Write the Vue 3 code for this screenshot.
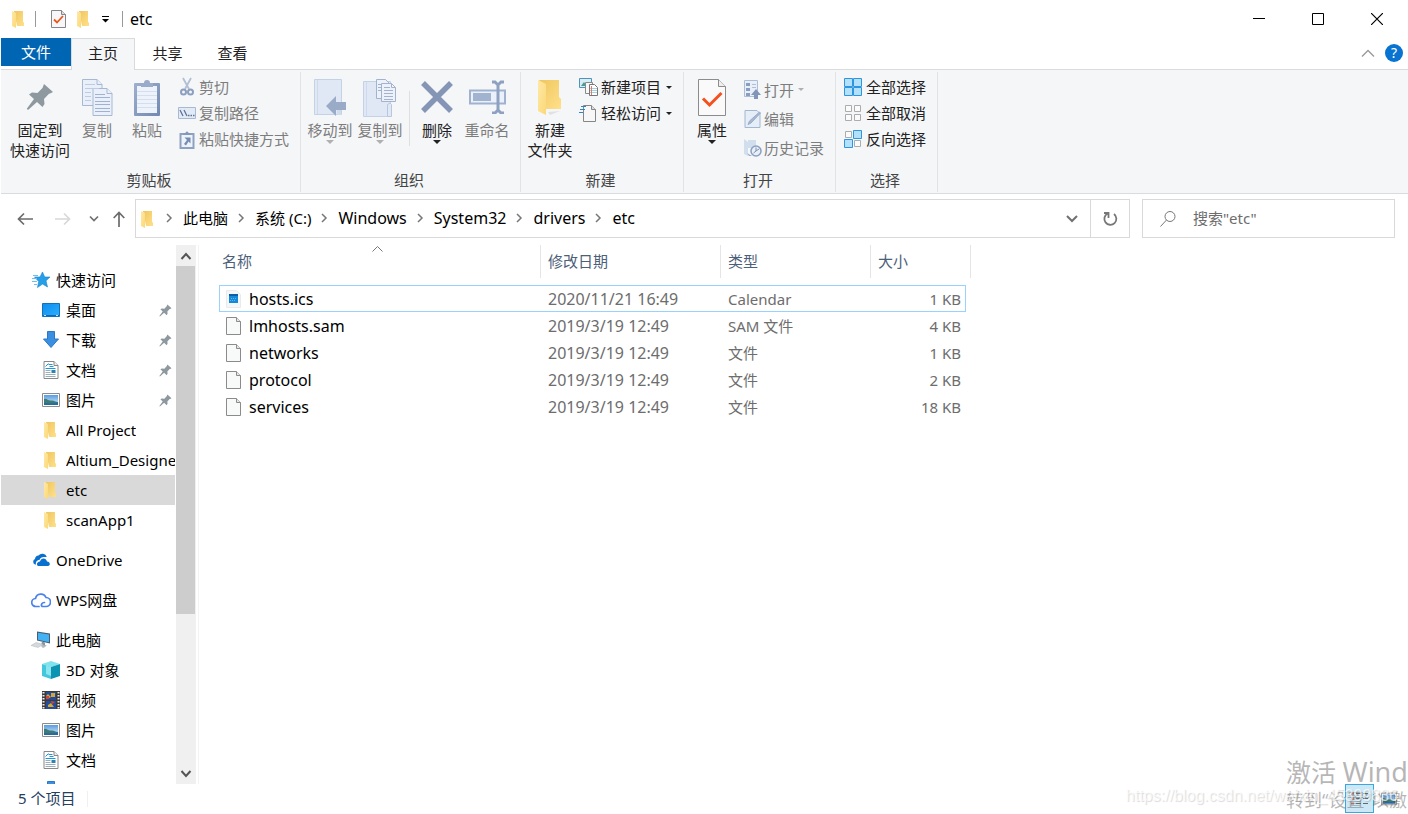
<script setup>
import { ref } from 'vue'

const tabs = ['主页', '共享', '查看']
const crumbs = ['此电脑', '系统 (C:)', 'Windows', 'System32', 'drivers', 'etc']
const search = ref('')
const isLatin = (s) => /^[\w ]+$/.test(s)

const nav = [
  { label: '快速访问', icon: 'star', root: true },
  { label: '桌面', icon: 'desktop', pinned: true },
  { label: '下载', icon: 'download', pinned: true },
  { label: '文档', icon: 'document', pinned: true },
  { label: '图片', icon: 'picture', pinned: true },
  { label: 'All Project', icon: 'folder' },
  { label: 'Altium_Designer', icon: 'folder' },
  { label: 'etc', icon: 'folder', selected: true },
  { label: 'scanApp1', icon: 'folder' },
  { label: 'OneDrive', icon: 'onedrive', root: true },
  { label: 'WPS网盘', icon: 'wps', root: true },
  { label: '此电脑', icon: 'pc', root: true },
  { label: '3D 对象', icon: 'cube' },
  { label: '视频', icon: 'video' },
  { label: '图片', icon: 'picture' },
  { label: '文档', icon: 'document' },
  { label: '', icon: 'download' }
]

const files = [
  { name: 'hosts.ics', date: '2020/11/21 16:49', type: 'Calendar', size: '1 KB', icon: 'calendar', focused: true },
  { name: 'lmhosts.sam', date: '2019/3/19 12:49', type: 'SAM 文件', size: '4 KB', icon: 'file' },
  { name: 'networks', date: '2019/3/19 12:49', type: '文件', size: '1 KB', icon: 'file' },
  { name: 'protocol', date: '2019/3/19 12:49', type: '文件', size: '2 KB', icon: 'file' },
  { name: 'services', date: '2019/3/19 12:49', type: '文件', size: '18 KB', icon: 'file' }
]
</script>

<template>
  <div class="window">
    <svg class="sprite" aria-hidden="true">
      <defs>
        <linearGradient id="g-fold" x1="0" y1="0" x2="1" y2="1"><stop offset="0" stop-color="#ffe9a6" /><stop offset="1" stop-color="#fbd878" /></linearGradient>
        <linearGradient id="g-back" x1="0" y1="0" x2="1" y2="1"><stop offset="0" stop-color="#efc65f" /><stop offset="1" stop-color="#ffe08a" /></linearGradient>
        <linearGradient id="g-clip" x1="0" y1="0" x2="1" y2="1"><stop offset="0" stop-color="#9fb0cf" /><stop offset="1" stop-color="#7288b0" /></linearGradient>
        <linearGradient id="g-desk" x1="0" y1="0" x2="1" y2="1"><stop offset="0" stop-color="#0d8eee" /><stop offset="1" stop-color="#2cb0ff" /></linearGradient>
        <linearGradient id="g-sky" x1="0" y1="0" x2="0" y2="1"><stop offset="0" stop-color="#5a9be0" /><stop offset="1" stop-color="#d8eefa" /></linearGradient>
        <symbol id="i-folder" viewBox="0 0 18 18">
          <path d="M4 1h9v11l1 .5V16H7z" fill="url(#g-back)" /><path d="M2 1l4 2v15l-4-2z" fill="url(#g-fold)" />
        </symbol>
        <symbol id="i-bigfolder" viewBox="0 0 28 38">
          <path d="M12 34l12-1-10 4z" fill="#dfe1e4" /><path d="M3 2h20v17l2 2v10H10z" fill="url(#g-back)" /><path d="M2 2l8 4v31l-8-4z" fill="url(#g-fold)" />
        </symbol>
        <symbol id="i-props" viewBox="0 0 28 37">
          <path d="M.5.5h20l7 7v29H.5z" fill="#fafafa" stroke="#8c8c8c" /><path d="M20.500.5v7h7" fill="#eee" stroke="#8c8c8c" /><path d="M5 19.500l6.500 6.500L23.500 14" fill="none" stroke="#f4511e" stroke-width="3" />
        </symbol>
        <symbol id="i-smallprops" viewBox="0 0 15 18">
          <path d="M.5.5h10l4 4v13H.5z" fill="#f7f7f9" stroke="#85858a" /><path d="M10.500.5v4h4" fill="#ddd" stroke="#85858a" /><path d="M3 9.500l3 3 6-6.500" fill="none" stroke="#ee5518" stroke-width="1.800" />
        </symbol>
        <symbol id="i-pin" viewBox="0 0 28 28">
          <path d="M18 1l9 8-3 1.500-1 .2-5 5.300.5 5-2 3-5.500-5L2 27 .8 25.800 8 16 3 11.500l3-2 5.500.5L16.500 5z" fill="#8d989f" />
        </symbol>
        <symbol id="i-copy" viewBox="0 0 31 37">
          <g fill="#eaf0f9" stroke="#a8b8d2"><path d="M.5.500H15l5 5v21H.5z" /><path d="M15 .5v5h5" /><path d="M11 9.500h14l5 5v22H11z" /><path d="M25 9.500v5h5" /></g>
          <path d="M3 5.500h10M3 9.500h14M3 13.500h6M3 17.500h6M3 21.500h6" stroke="#bfcbe0" /><path d="M13 15.500h10M13 18.500h15M13 22.500h15M13 25.500h15M13 29.500h15M13 32.500h15" stroke="#a0b2d2" />
        </symbol>
        <symbol id="i-paste" viewBox="0 0 26 37">
          <rect y="4" width="26" height="33" rx="1" fill="url(#g-clip)" /><path d="M3 7h20v27H3z" fill="#eef3fb" /><path d="M7 4h3a3 3 0 0 1 6 0h3v4H7z" fill="#9aabc9" /><path d="M3 12.500h20M3 16.500h20M3 20.500h20M3 24.500h20M3 28.500h20" stroke="#d3dfef" />
        </symbol>
        <symbol id="i-cut" viewBox="0 0 18 20">
          <path d="M5 1l6 11M13 1L7 12" stroke="#b3bfd4" stroke-width="1.800" /><g fill="none" stroke="#8c9fbf" stroke-width="2"><circle cx="5.500" cy="15" r="2.500" /><circle cx="12.500" cy="15" r="2.500" /></g>
        </symbol>
        <symbol id="i-path" viewBox="0 0 18 12">
          <path d="M.5.500h17v11H.5z" fill="#e2eaf5" stroke="#a8b9d3" /><path d="M2 3l3 6M6 3l3 6M10 8.500h1.500M12.500 8.500H14M15 8.500h1.500" stroke="#5d7399" stroke-width="1.300" />
        </symbol>
        <symbol id="i-shortcut" viewBox="0 0 15 19">
          <path d="M1 4h13v14H1z" fill="#edf3fb" stroke="#8fa1c0" stroke-width="2" /><path d="M4 5V3h2a1.500 1.500 0 0 1 3 0h2v2z" fill="#8598ba" /><path d="M5 7.500h6v6L9 11.500l-2.500 4-2-1.500 3-4z" fill="#778cb1" />
        </symbol>
        <symbol id="i-move" viewBox="0 0 33 38">
          <path d="M.5 1.500h27v35H.5z" fill="#dfe8f4" stroke="#c4d2e6" /><path d="M3.500 2v34" stroke="#cedaeb" /><path d="M23 24h4v13h-4z" fill="#d0dcec" /><path d="M12 28l10-10v6h10v8H22v6z" fill="#9aabc8" />
        </symbol>
        <symbol id="i-copyto" viewBox="0 0 34 39">
          <path d="M.5 3.500h27v35H.5z" fill="#dfe8f4" stroke="#c4d2e6" /><path d="M3.500 4v34" stroke="#cedaeb" /><path d="M24.500 26.500q3-3 4 0v12h-4z" fill="#dfe8f4" stroke="#b9c7dc" /><g fill="#edf2fa" stroke="#a3b3ce"><path d="M13.500 1.500h9l4 4v15h-13z" /><path d="M18.500 5.500h10l4 4v14h-14zM28.500 5.500v4h4" /></g><path d="M15 6.500h3M15 9.500h3M15 12.500h3M21 9.500h6M21 12.500h9M21 15.500h9M21 18.500h9M21 21.500h9" stroke="#a3b3ce" />
        </symbol>
        <symbol id="i-delete" viewBox="0 0 32 32"><path d="M2 2l28 28M30 2L2 30" stroke="#8595b5" stroke-width="5.500" /></symbol>
        <symbol id="i-rename" viewBox="0 0 37 34">
          <path d="M1 10.500h35v13H1z" fill="#eaf1fa" stroke="#a0b2d0" stroke-width="2" /><path d="M4 13h18v8H4z" fill="#a2b3d0" /><path d="M23 2h3l3 3 3-3h3M29 4v27M23 33h3l3-3 3 3h3" fill="none" stroke="#8fa1c0" stroke-width="3" />
        </symbol>
        <symbol id="i-newitem" viewBox="0 0 19 18">
          <path d="M.5.500h12v9H.5z" fill="#d9edf7" stroke="#4e93b8" /><path d="M2 8l3-4 2 3 2-2 3 3z" fill="#4d9a8f" /><path d="M6.500 4.500h7v11h-7z" fill="#f8f8f8" stroke="#8a8a8a" /><path d="M10.500 6.500h5l3 3v8h-8z" fill="#fff" stroke="#777" /><path d="M11 10.500h7M11 12.500h7M11 14.500h7" stroke="#a9cfe2" /><path d="M12.500 8v9" stroke="#e67a6a" />
        </symbol>
        <symbol id="i-easy" viewBox="0 0 19 18">
          <path d="M4.500 1.500h8l4 4v12h-12z" fill="#f7f7f7" stroke="#868686" /><path d="M12.500 1.500v4h4" fill="#ddd" stroke="#868686" /><path d="M2 2.500h5M1 5.500h5M0 8.500h4" stroke="#2d86c0" />
        </symbol>
        <symbol id="i-open" viewBox="0 0 18 19">
          <path d="M.5.500h13v16H.5z" fill="#e8eff8" stroke="#aebdd6" /><path d="M2 3h4v3H2zM2 8h4v3H2zM2 13h4v3H2z" fill="#8a9dbe" /><path d="M8 4.500h4M8 7.500h4" stroke="#b1bfd6" /><path d="M12 9l5 6h-3v4h-4v-4H7z" fill="#8195b8" />
        </symbol>
        <symbol id="i-edit" viewBox="0 0 17 18">
          <path d="M.5.500h12l3 3v14H.5z" fill="#e5edf7" stroke="#a5b6d0" /><path d="M3.500 14.500L5 11l10-9 1 1-9.500 10z" fill="#a8b7d1" stroke="#9badc9" />
        </symbol>
        <symbol id="i-history" viewBox="0 0 18 18">
          <path d="M0 0l4 3v14l-4-2zM4 1h8v8H4z" fill="#d1deed" /><path d="M3 14l5 3H5z" fill="#9caec9" /><circle cx="12" cy="12" r="5" fill="#e8eff8" stroke="#8c9fbf" stroke-width="1.500" /><path d="M12 8.500V12l3-2M12 12l-2.500 2" fill="none" stroke="#7b90b3" />
        </symbol>
        <symbol id="i-selall" viewBox="0 0 18 18"><g fill="#b3e1fb" stroke="#3095df"><path d="M.5.500h8v8h-8zM9.500.500h8v8h-8zM.5 9.500h8v8h-8zM9.500 9.500h8v8h-8z" /></g></symbol>
        <symbol id="i-selnone" viewBox="0 0 18 18"><g fill="#fbfbfb" stroke="#acacac"><path d="M1.500 1.500h6v6h-6zM10.500 1.500h6v6h-6zM1.500 10.500h6v6h-6zM10.500 10.500h6v6h-6z" /></g></symbol>
        <symbol id="i-selinv" viewBox="0 0 18 18"><path d="M1.500 1.500h6v6h-6zM10.500 10.500h6v6h-6z" fill="#fbfbfb" stroke="#acacac" /><path d="M9.500.500h8v8h-8zM.5 9.500h8v8h-8z" fill="#b3e1fb" stroke="#3095df" /></symbol>
        <symbol id="i-star" viewBox="0 0 18 16">
          <path d="M10.500 0l2.200 5H18l-4 3.800 1.500 6.200-5-3-5 3.500 1.200-6L2.500 5H8z" fill="#269fe8" stroke="#1583cc" stroke-width=".6" /><path d="M1 3.500h5M0 6.500h5M0 9.500h5M2 12.500h3" stroke="#6ac0f2" />
        </symbol>
        <symbol id="i-desktop" viewBox="0 0 18 14"><path d="M.5.500h17v13H.5z" fill="url(#g-desk)" stroke="#1272b8" /><path d="M1 12.500h16" stroke="#0f68b2" /><path d="M2 12.500h2M14 12.500h2" stroke="#bfe7ff" /></symbol>
        <symbol id="i-download" viewBox="0 0 18 18"><path d="M5.500.500h7V8h4L9 16.500 1.500 8h4z" fill="#3b8fe0" stroke="#2b78c6" /></symbol>
        <symbol id="i-document" viewBox="0 0 15 18">
          <path d="M.5.500h10l4 4v13H.5z" fill="#fff" stroke="#888" /><path d="M10.500.500v4h4" fill="#eee" stroke="#888" /><path d="M2 5.500l3-3M5 3.500h4M6 5.500h4M2 7.500h10" fill="none" stroke="#1c97d8" /><path d="M2 9.500h5M2 11.500h5M2 13.500h10M2 15.500h10" stroke="#9badb8" /><path d="M8 9h4v3H8z" fill="#2f82b0" />
        </symbol>
        <symbol id="i-picture" viewBox="0 0 18 14">
          <path d="M.5.500h17v13H.5z" fill="#fff" stroke="#8c8c8c" /><path d="M2 2h14v10H2z" fill="url(#g-sky)" /><path d="M2 6c3-1 4 2 7 1.500S13 9 16 9v3H2z" fill="#3d7b75" /><path d="M2 10q7 1 14-.5V12H2z" fill="#2768a8" />
        </symbol>
        <symbol id="i-onedrive" viewBox="0 0 18 13"><path d="M4 11H3a3 3 0 0 1 0-5.500A4 4 0 0 1 6.500 2a4.800 4.800 0 0 1 8.300 1.500C9 3 8 5 7.500 6.500 4.500 6.500 3.500 9 4 11z" fill="#0a70cf" /><path d="M6 12.500c-2-1-1-4.500 2-4.500 1-4 6-4 7 0 3 0 4 4 1 4.500z" fill="#0a70cf" /></symbol>
        <symbol id="i-wps" viewBox="0 0 20 16"><path d="M8 14.500H5A4 4 0 0 1 4.500 6.500 5.500 5.500 0 0 1 15 5.500a4.500 4.500 0 0 1 0 9h-3q-2 0-1.500-2t3-2" fill="none" stroke="#4a82ee" stroke-width="1.700" stroke-linecap="round" /></symbol>
        <symbol id="i-pc" viewBox="0 0 20 17"><path d="M6 0l13 2v10L6 9z" fill="#4a5c6d" /><path d="M7 1.200l11 1.700v7.800L7 8.200z" fill="#42b2f4" /><path d="M11 10l3 1v2.500l2 1-6-.5z" fill="#8798a5" /><path d="M5 11l7 2-5 3-7-2z" fill="#d6dadd" stroke="#b0b6ba" stroke-width=".5" /><path d="M10 15l3-1 2 1-3 1.500z" fill="#b3bac0" /></symbol>
        <symbol id="i-cube" viewBox="0 0 18 18"><path d="M9 0l9 3-9 3-9-3z" fill="#80e2ed" /><path d="M0 3l9 3v12l-9-3z" fill="#43c7dc" /><path d="M18 3L9 6v12l9-3z" fill="#0a94b2" /><path d="M4 4.500L9 6v9l-5-2z" fill="#8ae5ef" /></symbol>
        <symbol id="i-video" viewBox="0 0 18 18"><path d="M0 0h18v19H0z" fill="#3b3b3b" /><path d="M1.500 1v17M16.500 1v17" stroke="#eee" stroke-width="2" stroke-dasharray="1.500 1.500" /><path d="M4 1h10v8H4zM4 10h10v8H4z" fill="#254c9c" /><path d="M4 5l2-2 3 3-2 1H4zM9 2h4v4H9zM6 14l3-2 3 4H6z" fill="#d6a92d" /><path d="M4 5h3v3H4zM9 10l4 1-3 2z" fill="#d84335" /></symbol>
        <symbol id="i-file" viewBox="0 0 15 18"><path d="M.5.500h10l4 4v13H.5z" fill="#f8f9f9" stroke="#8b8b8b" /><path d="M10.500.500v4h4" fill="#e7e7e7" stroke="#8b8b8b" /></symbol>
        <symbol id="i-calendar" viewBox="0 0 15 18"><path d="M.5.500h10l4 4v13H.5z" fill="#f5f6f7" stroke="#e9eaeb" /><path d="M3 4h9v9H3z" fill="#1688d8" /><path d="M3 4h9v2H3z" fill="#0a5ea8" /><path d="M5 8.500h6M4 10.500h5" stroke="#5fb6ee" stroke-dasharray="1 1" /></symbol>
      </defs>
    </svg>

    <header class="titlebar">
      <svg class="s18"><use href="#i-folder" /></svg>
      <span class="rule first"></span>
      <button class="bare" aria-label="属性"><svg class="s15"><use href="#i-smallprops" /></svg></button>
      <button class="bare quick" aria-label="新建文件夹"><svg class="s18"><use href="#i-folder" /></svg></button>
      <button class="bare" aria-label="自定义快速访问工具栏"><svg width="8" height="8"><path d="M0 1.500h7" stroke="#000" /><path d="M0 4h7L3.500 7.500z" /></svg></button>
      <span class="rule second"></span>
      <h1>etc</h1>
      <div class="controls">
        <button class="bare" aria-label="最小化"><svg width="12" height="12"><path d="M0 5.500h12" stroke="#000" /></svg></button>
        <button class="bare" aria-label="最大化"><svg width="12" height="12"><path d="M.5.500h11v11H.5z" fill="none" stroke="#000" /></svg></button>
        <button class="bare" aria-label="关闭"><svg width="12" height="12"><path d="M0 0l12 12M12 0L0 12" stroke="#000" stroke-width="1.200" /></svg></button>
      </div>
    </header>

    <nav class="tabs">
      <button class="file">文件</button>
      <button v-for="(t, i) in tabs" :key="t" class="tab" :class="{ active: i === 0 }">{{ t }}</button>
      <div class="help">
        <button class="bare" aria-label="最小化功能区"><svg width="14" height="8"><path d="M1 7.500l6-6 6 6" fill="none" stroke="#999" stroke-width="1.300" /></svg></button>
        <button class="question" aria-label="帮助">?</button>
      </div>
    </nav>

    <section class="ribbon">
      <div class="group clipboard">
        <div class="tools">
          <button class="big wide"><span class="art"><svg width="28" height="28"><use href="#i-pin" /></svg></span>固定到<br />快速访问</button>
          <button class="big dim"><span class="art"><svg width="31" height="37"><use href="#i-copy" /></svg></span>复制</button>
          <button class="big dim"><span class="art"><svg width="26" height="37"><use href="#i-paste" /></svg></span>粘贴</button>
          <div class="stack">
            <button class="small dim"><svg width="18" height="20"><use href="#i-cut" /></svg>剪切</button>
            <button class="small dim"><svg width="18" height="12"><use href="#i-path" /></svg>复制路径</button>
            <button class="small dim"><svg width="18" height="19"><use href="#i-shortcut" /></svg>粘贴快捷方式</button>
          </div>
        </div>
        <div class="caption">剪贴板</div>
      </div>
      <div class="group organize">
        <div class="tools">
          <button class="big dim"><span class="art"><svg width="33" height="38"><use href="#i-move" /></svg></span>移动到<i class="caret"></i></button>
          <button class="big dim"><span class="art"><svg width="34" height="39"><use href="#i-copyto" /></svg></span>复制到<i class="caret"></i></button>
          <span class="divider"></span>
          <button class="big"><span class="art"><svg width="32" height="32"><use href="#i-delete" /></svg></span>删除<i class="caret"></i></button>
          <button class="big dim"><span class="art"><svg width="37" height="34"><use href="#i-rename" /></svg></span>重命名</button>
        </div>
        <div class="caption">组织</div>
      </div>
      <div class="group new">
        <div class="tools">
          <button class="big"><span class="art"><svg width="28" height="38"><use href="#i-bigfolder" /></svg></span>新建<br />文件夹</button>
          <div class="stack">
            <button class="small"><svg width="19" height="18"><use href="#i-newitem" /></svg>新建项目<i class="caret"></i></button>
            <button class="small"><svg width="19" height="18"><use href="#i-easy" /></svg>轻松访问<i class="caret"></i></button>
          </div>
        </div>
        <div class="caption">新建</div>
      </div>
      <div class="group open">
        <div class="tools">
          <button class="big"><span class="art"><svg width="28" height="37"><use href="#i-props" /></svg></span>属性<i class="caret"></i></button>
          <div class="stack loose">
            <button class="small dim"><svg width="18" height="19"><use href="#i-open" /></svg>打开<i class="caret"></i></button>
            <button class="small dim"><svg width="18" height="18"><use href="#i-edit" /></svg>编辑</button>
            <button class="small dim"><svg width="18" height="18"><use href="#i-history" /></svg>历史记录</button>
          </div>
        </div>
        <div class="caption">打开</div>
      </div>
      <div class="group select">
        <div class="tools">
          <div class="stack">
            <button class="small"><svg width="18" height="18"><use href="#i-selall" /></svg>全部选择</button>
            <button class="small"><svg width="18" height="18"><use href="#i-selnone" /></svg>全部取消</button>
            <button class="small"><svg width="18" height="18"><use href="#i-selinv" /></svg>反向选择</button>
          </div>
        </div>
        <div class="caption">选择</div>
      </div>
    </section>

    <div class="location">
      <div class="history">
        <button class="bare" aria-label="后退"><svg width="16" height="14"><path d="M16 7H1.500M7 1.500L1.500 7 7 12.500" fill="none" stroke="#6b6b6b" stroke-width="1.700" /></svg></button>
        <button class="bare" aria-label="前进"><svg width="16" height="14"><path d="M0 7h14.500M9 1.500L14.500 7 9 12.500" fill="none" stroke="#d8d8d8" stroke-width="1.700" /></svg></button>
        <button class="bare" aria-label="最近的位置"><svg width="10" height="8"><path d="M1 1.500l4 4 4-4" fill="none" stroke="#707070" stroke-width="1.700" /></svg></button>
        <button class="bare" aria-label="上移"><svg width="12" height="16"><path d="M6 16V1.500M.7 7L6 1.500 11.300 7" fill="none" stroke="#6b6b6b" stroke-width="1.700" /></svg></button>
      </div>
      <div class="address">
        <svg class="s18"><use href="#i-folder" /></svg>
        <template v-for="c in crumbs" :key="c">
          <svg class="chev" width="27" height="12"><path d="M11 1l4 4-4 4" fill="none" stroke="#777" stroke-width="1.500" /></svg>
          <a href="#" :class="{ latin: isLatin(c) }">{{ c }}</a>
        </template>
        <button class="bare drop" aria-label="上一个位置"><svg width="12" height="8"><path d="M1 1l5 5 5-5" fill="none" stroke="#707070" stroke-width="2" /></svg></button>
        <button class="refresh" aria-label="刷新"><svg width="16" height="16"><path d="M12 3a6 6 0 1 1-6.500-.5M6.500 7V2H2" fill="none" stroke="#777" stroke-width="1.800" /></svg></button>
      </div>
      <label class="search">
        <svg width="16" height="16"><circle cx="10" cy="5.500" r="5" fill="none" stroke="#777" /><path d="M6.500 9L.5 15.500" stroke="#777" /></svg>
        <input v-model="search" type="text" placeholder='搜索"etc"' aria-label='搜索"etc"' />
      </label>
    </div>

    <main class="body">
      <aside class="side">
        <ul>
          <li v-for="(n, i) in nav" :key="i" :class="{ root: n.root, selected: n.selected }">
            <a href="#"><span class="navicon"><svg :class="n.icon"><use :href="'#i-' + n.icon" /></svg></span><span class="text">{{ n.label }}</span></a>
            <svg v-if="n.pinned" class="tack"><use href="#i-pin" /></svg>
          </li>
        </ul>
        <div class="scroll">
          <button aria-label="向上滚动"><svg width="12" height="8"><path d="M1.500 7L6 2l4.500 5" fill="none" stroke="#555" stroke-width="2" /></svg></button>
          <div class="track"><div class="thumb"></div></div>
          <button aria-label="向下滚动"><svg width="12" height="8"><path d="M1.500 1L6 6l4.500-5" fill="none" stroke="#555" stroke-width="2" /></svg></button>
        </div>
      </aside>
      <section class="list">
        <table>
          <colgroup><col class="c-name" /><col class="c-date" /><col class="c-type" /><col class="c-size" /><col class="c-end" /></colgroup>
          <thead>
            <tr>
              <th scope="col"><span>名称</span><svg class="sort" width="11" height="6"><path d="M.5 5.500l5-5 5 5" fill="none" stroke="#777" /></svg></th>
              <th scope="col"><span>修改日期</span></th>
              <th scope="col"><span>类型</span></th>
              <th scope="col" colspan="2"><span>大小</span></th>
            </tr>
          </thead>
          <tbody>
            <tr v-for="f in files" :key="f.name" :class="{ focused: f.focused }">
              <td class="latin"><div class="name"><svg class="s15"><use :href="'#i-' + f.icon" /></svg>{{ f.name }}</div></td>
              <td class="latin">{{ f.date }}</td>
              <td>{{ f.type }}</td>
              <td class="size">{{ f.size }}</td>
              <td class="end"></td>
            </tr>
          </tbody>
        </table>
      </section>
    </main>

    <footer class="status">
      <span class="count">5 个项目</span>
      <div class="views">
        <button class="on" aria-label="详细信息"><svg width="18" height="16"><path d="M0 2.500h3M0 7.500h3M0 12.500h3" stroke="#c77a73" stroke-width="2" /><path d="M5 2.500h5M5 7.500h5M5 12.500h5M12 2.500h5M12 7.500h5M12 12.500h5" stroke="#60696e" /></svg></button>
        <button aria-label="大图标"><svg width="16" height="14"><use href="#i-picture" /></svg></button>
      </div>
    </footer>

    <div class="activation"><p class="head">激活 <span>Wind</span></p><p>转到“设置”以激</p></div>
    <div class="credit">https://blog.csdn.net/weixin_45399836</div>
  </div>
</template>

<style>
body { margin: 0; background: #fff; overflow: hidden; }
</style>

<style scoped>
* { box-sizing: border-box; }
.window { position: relative; display: flex; flex-direction: column; height: 100vh; padding-left: 1px; overflow: hidden; background: #fff; color: #000; font: 15px/20px "Noto Sans", "Noto Sans CJK SC", sans-serif; }
.sprite { position: absolute; width: 0; height: 0; }
svg { flex: none; }
button { font: inherit; color: inherit; margin: 0; padding: 0; border: 0; background: none; }
a { color: inherit; text-decoration: none; }
.latin { font-size: 16px; }
.bare { display: flex; align-items: center; justify-content: center; }
.s18 { width: 18px; height: 18px; }
.s15 { width: 15px; height: 18px; }

.titlebar { display: flex; align-items: center; height: 38px; flex: none; padding-left: 9px; }
.rule { width: 1px; height: 16px; background: #999; }
.rule.first { margin: 0 15px 0 7px; }
.quick { margin: 0 9px; }
.rule.second { margin: 0 7px 0 12px; }
h1 { margin: 0; font-size: 16px; font-weight: 400; }
.controls { display: flex; margin-left: auto; padding-right: 2px; }
.controls button { width: 59px; height: 38px; }

.tabs { display: flex; height: 32px; flex: none; position: relative; z-index: 1; margin-bottom: -1px; color: #222; }
.file { width: 70px; height: 28px; background: #0066b4; color: #fff; }
.tab { width: 65px; height: 32px; padding-bottom: 3px; }
.tab.active { width: 64px; background: #f5f6f8; border: 1px solid #d9dadc; border-bottom: 0; }
.help { display: flex; align-items: center; gap: 10px; margin-left: auto; padding-right: 5px; height: 30px; }
.question { width: 18px; height: 18px; border-radius: 9px; background: #0873d0; color: #fff; font-size: 14px; line-height: 18px; text-align: center; }

.ribbon { display: flex; flex: none; height: 125px; background: #f4f6f8; border-top: 1px solid #dadbdc; border-bottom: 1px solid #dadbdc; padding-top: 2px; color: #222; }
.group { display: flex; flex-direction: column; border-right: 1px solid #e2e3e5; height: 120px; flex: none; white-space: nowrap; }
.clipboard { width: 300px; }
.organize { width: 220px; }
.new { width: 163px; }
.open { width: 152px; }
.select { width: 102px; }
.tools { display: flex; height: 98px; }
.clipboard .tools { padding-left: 9px; }
.organize .tools, .new .tools { padding-left: 4px; }
.open .tools { padding-left: 3px; }
.select .tools { padding-left: 8px; }
.caption { padding-right: 3px; line-height: 20px; text-align: center; color: #444; }
.big { display: flex; flex-direction: column; align-items: center; width: 50px; line-height: 20px; padding-top: 2px; height: 98px; }
.big.wide { width: 60px; margin-right: 2px; }
.art { display: flex; align-items: center; justify-content: center; height: 46px; }
.clipboard .stack { margin-left: 6px; }
.new .stack { margin-left: 4px; }
.dim { color: #7d7d7d; }
.caret { width: 0; height: 0; border: 4px solid transparent; border-top-color: #222; border-bottom: 0; }
.small .caret { border-width: 3px; border-bottom: 0; margin-left: 2px; }
.dim .caret { border-top-color: #b0b0b0; }
.divider { width: 1px; height: 55px; margin: 19px 2px 0 4px; background: #dddfe2; }
.stack { display: flex; flex-direction: column; padding-top: 2px; }
.small { display: flex; align-items: center; gap: 3px; height: 26px; }
.select .small { gap: 4px; }
.loose { padding-top: 3px; margin-left: 7px; }
.loose .small { height: 29px; gap: 2px; }

.location { display: flex; align-items: center; flex: none; height: 51px; padding-right: 13px; padding-bottom: 2px; }
.history { display: flex; align-items: center; width: 134px; padding-left: 16px; }
.history button:nth-child(2) { margin-left: 22px; }
.history button:nth-child(3) { margin-left: 18px; }
.history button:nth-child(4) { margin-left: 14px; }
.address { display: flex; align-items: center; flex: 1; height: 39px; border: 1px solid #d9d9d9; padding-left: 3px; white-space: nowrap; }
.address > .s18 { margin-right: -1px; }
.address a { padding-bottom: 2px; }
.drop { width: 36px; height: 37px; margin-left: auto; }
.refresh { display: flex; align-items: center; justify-content: center; width: 39px; height: 37px; border-left: 1px solid #d9d9d9; }
.search { display: flex; align-items: center; width: 253px; height: 39px; margin-left: 12px; border: 1px solid #d9d9d9; padding-left: 17px; }
.search input { flex: 1; min-width: 0; margin-left: 17px; padding: 0 0 2px; border: 0; outline: 0; font: inherit; background: none; }
.search input::placeholder { color: #6d6d6d; opacity: 1; }

.body { display: flex; flex: 1; min-height: 0; }
.side { display: flex; width: 198px; flex: none; border-right: 1px solid #f3f3f3; overflow: hidden; }
.side ul { flex: 1; min-width: 0; margin: 0; padding: 20px 0 0; list-style: none; overflow: hidden; }
.side li { display: flex; align-items: center; height: 30px; padding-left: 40px; margin-right: 1px; }
.side li.root { padding-left: 30px; margin-top: 10px; }
.side li.root:first-child { margin-top: 0; }
.side li.selected { background: #d9d9d9; }
.side a { display: flex; align-items: center; flex: 1; min-width: 0; }
.text { overflow: hidden; white-space: nowrap; }
.navicon { display: flex; align-items: center; justify-content: center; width: 20px; margin-right: 5px; flex: none; }
.navicon svg { width: 18px; height: 18px; }
.navicon .picture, .navicon .desktop { height: 14px; }
.navicon .wps, .navicon .pc { width: 20px; }
.tack { width: 13px; height: 13px; margin-right: 3px; }
.scroll { display: flex; flex-direction: column; width: 20px; flex: none; background: #f0f0f0; margin-right: 2px; }
.scroll button { height: 21px; display: flex; align-items: center; justify-content: center; }
.track { flex: 1; padding-right: 1px; }
.thumb { height: 70%; background: #cdcdcd; }

.list { flex: 1; min-width: 0; padding-left: 20px; }
table { border-spacing: 0; table-layout: fixed; width: 752px; }
.c-name { width: 322px; }
.c-date { width: 180px; }
.c-type { width: 150px; }
.c-size { width: 95px; }
.c-end { width: 5px; }
th { position: relative; height: 40px; padding: 0 0 7px; text-align: left; font-weight: 400; color: #4c607a; }
th span { display: block; height: 33px; padding-left: 7px; line-height: 33px; border-right: 1px solid #e5e5e5; }
th:first-child span { padding-left: 3px; }
.sort { position: absolute; left: 153px; top: 1px; }
td { height: 27px; padding: 0 0 0 7px; color: #6d6d6d; white-space: nowrap; }
.name { display: flex; align-items: center; gap: 8px; color: #000; }
.size { padding: 0 5px 0 0; text-align: right; }
.end { padding: 0; }
.focused td { border-top: 1px solid #99d1ff; border-bottom: 1px solid #99d1ff; }
.focused td:first-child { border-left: 1px solid #99d1ff; padding-left: 6px; }
.focused .size { border-right: 1px solid #99d1ff; padding-right: 4px; }
.focused .end { border: 0; }

.status { display: flex; align-items: center; justify-content: space-between; height: 30px; flex: none; color: #25405f; }
.count { padding: 0 12px 2px 17px; height: 16px; line-height: 14px; border-right: 1px solid #f0f0f0; }
.views { display: flex; height: 30px; padding-right: 4px; }
.views button { display: flex; align-items: center; justify-content: center; width: 30px; }
.views .on { height: 29px; background: #cce8f6; border: 1px solid #3aa7de; width: 29px; }
.activation { position: absolute; left: calc(100% - 122px); bottom: 3px; white-space: nowrap; color: rgba(110, 110, 110, .5); font-size: 18px; line-height: 22px; pointer-events: none; }
.activation p { margin: 0; }
.activation .head { font-size: 25px; line-height: 34px; }
.head span { font-size: 27px; }
.credit { position: absolute; right: 10px; bottom: 8px; font: 16px/20px "Liberation Sans", sans-serif; color: rgba(255, 255, 255, .7); text-shadow: 1px 1px 1px rgba(0, 0, 0, .15); pointer-events: none; }
</style>
